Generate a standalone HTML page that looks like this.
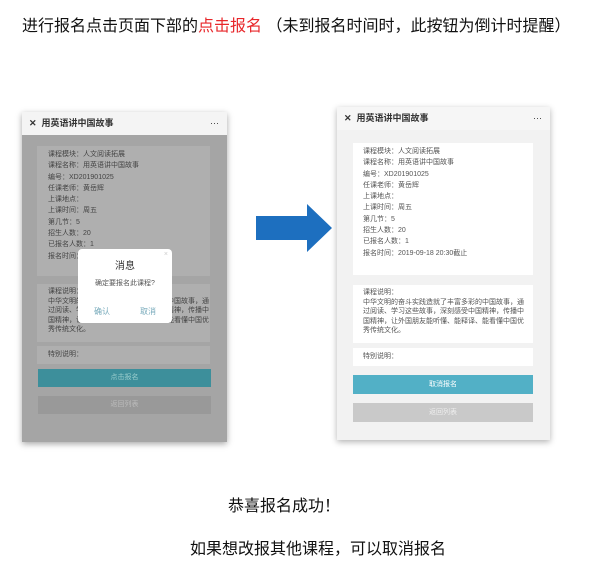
<!DOCTYPE html>
<html><head><meta charset="utf-8"><style>
*{margin:0;padding:0;box-sizing:border-box}
body{width:612px;height:561px;background:#fff;position:relative;overflow:hidden;font-family:"Liberation Sans","Noto Sans CJK SC",sans-serif;color:#222}
.a{position:absolute}
.t{font-size:7px;line-height:11.3px;color:#555;white-space:nowrap}
.btn{position:absolute;font-size:7px;color:#fff;text-align:center}
</style></head><body>
<div class="a" style="left:22px;top:16px;font-size:16px;line-height:22px;white-space:nowrap;color:#111">进行报名点击页面下部的<span style="color:#e8262a">点击报名</span> （未到报名时间时，此按钮为倒计时提醒）</div>

<!-- left phone -->
<div class="a" style="left:22px;top:112px;width:205px;height:330px;background:#a5a5a5;box-shadow:0 2px 6px rgba(0,0,0,.35)">
  <div class="a" style="left:0;top:0;width:205px;height:23px;background:#f4f4f4;font-size:9px;font-weight:bold;line-height:23px;padding-left:7px;color:#333">✕&nbsp; 用英语讲中国故事<span style="position:absolute;right:8px;font-weight:normal">···</span></div>
  <div class="a" style="left:15px;top:34px;width:173px;height:130px;background:#afafaf"></div>
  <div class="a t" style="left:26px;top:37px;color:#444">课程模块：人文阅读拓展<br>课程名称：用英语讲中国故事<br>编号：XD201901025<br>任课老师：黄岳辉<br>上课地点：<br>上课时间：周五<br>第几节：5<br>招生人数：20<br>已报名人数：1<br>报名时间：</div>
  <div class="a" style="left:15px;top:172px;width:173px;height:58px;background:#afafaf"></div>
  <div class="a t" style="left:26px;top:175px;color:#444;line-height:9.5px">课程说明：<br>中华文明的奋斗实践造就了丰富多彩的中国故事，通<br>过阅读、学习这些故事，深刻感受中国精神，传播中<br>国精神，让外国朋友能听懂、能释译、能看懂中国优<br>秀传统文化。</div>
  <div class="a" style="left:15px;top:234px;width:173px;height:18px;background:#afafaf"></div>
  <div class="a t" style="left:26px;top:237px;color:#444">特别说明：</div>
  <div class="btn" style="left:16px;top:257px;width:173px;height:18px;line-height:18px;background:#3d8f9b;color:#9cc">点击报名</div>
  <div class="btn" style="left:16px;top:284px;width:173px;height:18px;line-height:18px;background:#999;color:#bbb">返回列表</div>
  <div class="a" style="left:56px;top:137px;width:94px;height:74px;background:#fff;border-radius:4px">
    <div class="a" style="right:4px;top:2px;font-size:7px;color:#ccc">×</div>
    <div class="a" style="left:0;top:8px;width:94px;text-align:center;font-size:10px;color:#333">消息</div>
    <div class="a" style="left:0;top:29px;width:94px;text-align:center;font-size:7px;color:#555">确定要报名此课程?</div>
    <div class="a" style="left:16px;top:57px;font-size:8px;color:#7ab">确认</div>
    <div class="a" style="left:62px;top:57px;font-size:8px;color:#7ab">取消</div>
  </div>
</div>

<!-- arrow -->
<svg class="a" style="left:255px;top:203px" width="78" height="50"><polygon points="1,13 52,13 52,1 77,25 52,49 52,37 1,37" fill="#1d6fbf"/></svg>

<!-- right phone -->
<div class="a" style="left:337px;top:107px;width:213px;height:333px;background:#f2f2f2;box-shadow:0 2px 6px rgba(0,0,0,.3)">
  <div class="a" style="left:0;top:0;width:213px;height:23px;background:#f6f6f6;font-size:9px;font-weight:bold;line-height:23px;padding-left:7px;color:#333">✕&nbsp; 用英语讲中国故事<span style="position:absolute;right:8px;font-weight:normal">···</span></div>
  <div class="a" style="left:16px;top:36px;width:180px;height:132px;background:#fff"></div>
  <div class="a t" style="left:26px;top:39px">课程模块：人文阅读拓展<br>课程名称：用英语讲中国故事<br>编号：XD201901025<br>任课老师：黄岳辉<br>上课地点：<br>上课时间：周五<br>第几节：5<br>招生人数：20<br>已报名人数：1<br>报名时间：2019-09-18 20:30截止</div>
  <div class="a" style="left:16px;top:178px;width:180px;height:58px;background:#fff"></div>
  <div class="a t" style="left:26px;top:181px;line-height:9.5px">课程说明：<br>中华文明的奋斗实践造就了丰富多彩的中国故事，通<br>过阅读、学习这些故事，深刻感受中国精神，传播中<br>国精神，让外国朋友能听懂、能释译、能看懂中国优<br>秀传统文化。</div>
  <div class="a" style="left:16px;top:241px;width:180px;height:18px;background:#fff"></div>
  <div class="a t" style="left:26px;top:244px">特别说明：</div>
  <div class="btn" style="left:16px;top:268px;width:180px;height:19px;line-height:19px;background:#52b0c6">取消报名</div>
  <div class="btn" style="left:16px;top:296px;width:180px;height:19px;line-height:19px;background:#c9c9c9;color:#eee">返回列表</div>
</div>

<div class="a" style="left:228px;top:492px;font-size:16px;color:#111;white-space:nowrap">恭喜报名成功！</div>
<div class="a" style="left:190px;top:535px;font-size:16px;color:#111;white-space:nowrap">如果想改报其他课程，可以取消报名</div>
</body></html>
